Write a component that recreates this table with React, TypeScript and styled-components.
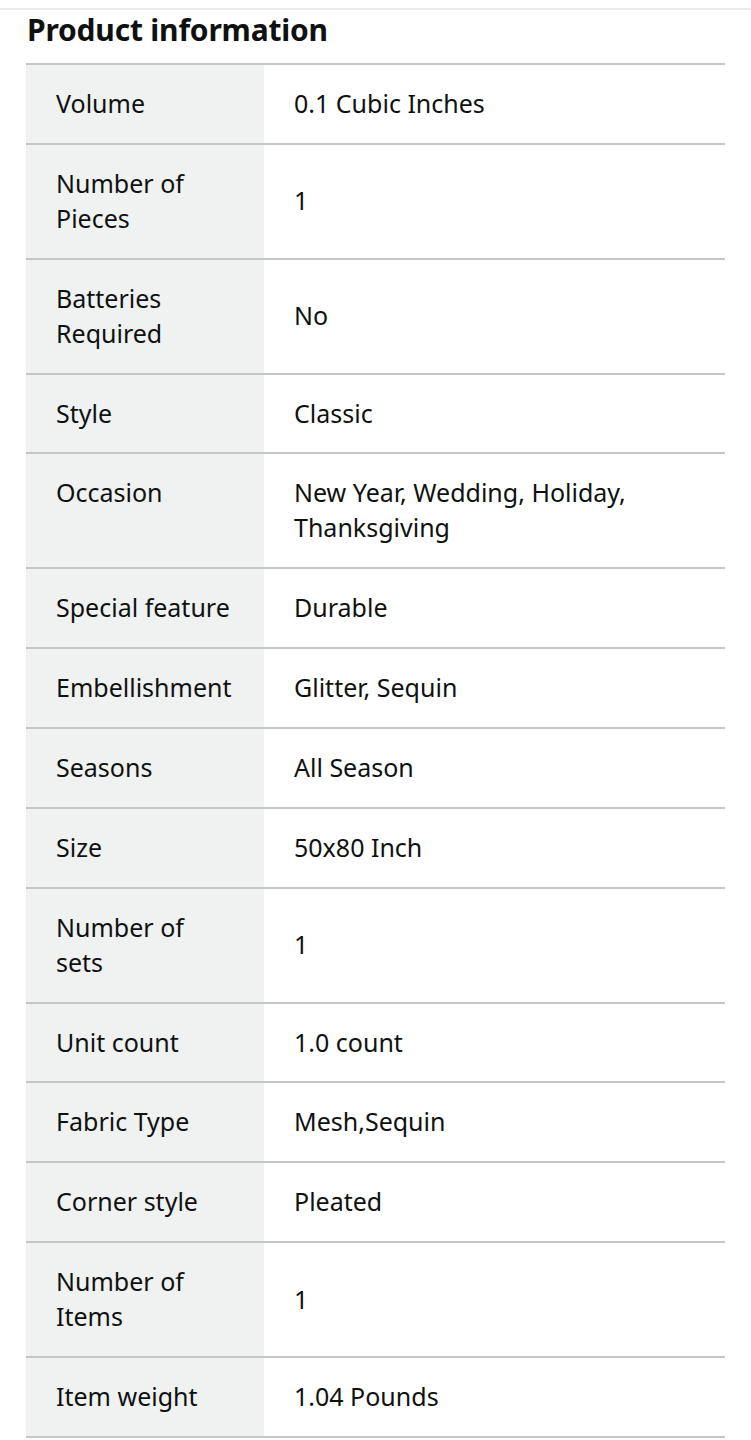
import React from "react";
import styled, { createGlobalStyle } from "styled-components";

const rows: [string, string][] = [
  ["Volume", "0.1 Cubic Inches"],
  ["Number of Pieces", "1"],
  ["Batteries Required", "No"],
  ["Style", "Classic"],
  ["Occasion", "New Year, Wedding, Holiday, Thanksgiving"],
  ["Special feature", "Durable"],
  ["Embellishment", "Glitter, Sequin"],
  ["Seasons", "All Season"],
  ["Size", "50x80 Inch"],
  ["Number of sets", "1"],
  ["Unit count", "1.0 count"],
  ["Fabric Type", "Mesh,Sequin"],
  ["Corner style", "Pleated"],
  ["Number of Items", "1"],
  ["Item weight", "1.04 Pounds"],
];

const GlobalStyle = createGlobalStyle`
  body {
    margin: 0;
    background: #ffffff;
    font-family: "Noto Sans", "Open Sans", sans-serif;
    color: #0f1111;
  }
`;

const Page = styled.div`
  border-top: 2px solid #ebebeb;
  margin-top: 8px;
  padding: 0 26px;
`;

const Title = styled.h2`
  margin: 0;
  padding: 0 0 0 1px;
  font-size: 30px;
  font-weight: 700;
  line-height: 40px;
  height: 53px;
  letter-spacing: -0.2px;
`;

const Table = styled.table`
  width: 699px;
  table-layout: fixed;
  border-collapse: collapse;
  font-size: 25px;
  line-height: 35px;
`;

const Row = styled.tr`
  border-top: 2px solid #c4c7c7;
  &:last-child {
    border-bottom: 2px solid #c4c7c7;
  }
`;

const Label = styled.th`
  width: 238px;
  box-sizing: border-box;
  background: #f0f2f2;
  text-align: left;
  font-weight: 400;
  vertical-align: top;
  padding: 21px 30px 21.87px 30px;
`;

const Value = styled.td`
  vertical-align: middle;
  padding: 21px 30px 21.87px 30px;
`;

export default function App() {
  return (
    <>
      <GlobalStyle />
      <Page>
        <Title>Product information</Title>
        <Table>
          <tbody>
            {rows.map(([k, v]) => (
              <Row key={k}>
                <Label>{k}</Label>
                <Value>{v}</Value>
              </Row>
            ))}
          </tbody>
        </Table>
      </Page>
    </>
  );
}
